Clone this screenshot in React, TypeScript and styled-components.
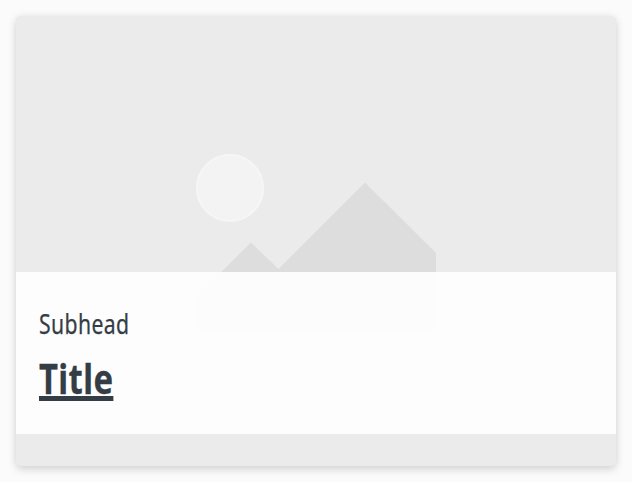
import React from "react";
import styled, { createGlobalStyle } from "styled-components";

const GlobalStyle = createGlobalStyle`
  * { box-sizing: border-box; }
  body { margin: 0; background: #fbfbfb; }
`;

const Page = styled.main`
  height: 482px;
  padding: 16px;
`;

const Card = styled.article`
  position: relative;
  display: flex;
  flex-direction: column;
  justify-content: flex-end;
  height: 450px;
  padding-bottom: 32px;
  border-radius: 5px;
  background: #ebebeb;
  box-shadow: 0 4px 8px rgba(0, 0, 0, 0.12), 0 0 8px rgba(0, 0, 0, 0.07);
`;

const Placeholder = styled.svg`
  position: absolute;
  left: 180px;
  top: 137px;
  width: 240px;
  height: 179px;
`;

const Caption = styled.div`
  position: relative;
  height: 162px;
  padding: 34px 23px 0;
  background: rgba(255, 255, 255, 0.9);
  color: #343d46;
  font-family: "Noto Sans", sans-serif;
`;

const Subhead = styled.p`
  width: max-content;
  margin: 0;
  font-size: 27px;
  line-height: 36px;
  letter-spacing: 0.5px;
  -webkit-text-stroke: 0.25px #343d46;
  transform: scaleX(0.785);
  transform-origin: left;
`;

const Title = styled.h2`
  width: max-content;
  margin: 10px 0 0;
  font-size: 42px;
  font-weight: 700;
  line-height: 52px;
  letter-spacing: 0.5px;
  -webkit-text-stroke: 0.3px #343d46;
  text-decoration: underline;
  text-decoration-thickness: 5px;
  text-underline-offset: 2px;
  text-decoration-skip-ink: none;
  transform: scaleX(0.782);
  transform-origin: left;
`;

export default function App() {
  return (
    <>
      <GlobalStyle />
      <Page>
        <Card>
          <Placeholder viewBox="0 0 240 179" aria-hidden="true">
            <circle cx="34" cy="35" r="33" fill="#f3f3f3" stroke="#f6f6f6" strokeWidth="2" />
            <path d="M0 144L55 89.500L82.500 116L169 29.500L240 100V178H0Z" fill="#ddd" />
          </Placeholder>
          <Caption>
            <Subhead>Subhead</Subhead>
            <Title>Title</Title>
          </Caption>
        </Card>
      </Page>
    </>
  );
}
